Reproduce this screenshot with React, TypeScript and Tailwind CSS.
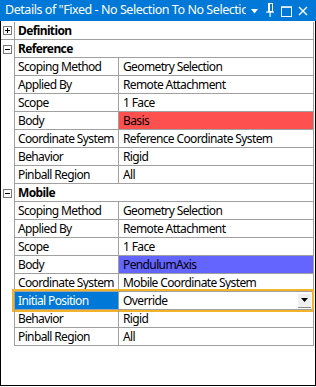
import React from 'react';

type Row = { label: string; value: string; bg?: string; selected?: boolean; dropdown?: boolean };

const referenceRows: Row[] = [
  { label: 'Scoping Method', value: 'Geometry Selection' },
  { label: 'Applied By', value: 'Remote Attachment' },
  { label: 'Scope', value: '1 Face' },
  { label: 'Body', value: 'Basis', bg: 'bg-[#ff5050]' },
  { label: 'Coordinate System', value: 'Reference Coordinate System' },
  { label: 'Behavior', value: 'Rigid' },
  { label: 'Pinball Region', value: 'All' },
];

const mobileRows: Row[] = [
  { label: 'Scoping Method', value: 'Geometry Selection' },
  { label: 'Applied By', value: 'Remote Attachment' },
  { label: 'Scope', value: '1 Face' },
  { label: 'Body', value: 'PendulumAxis', bg: 'bg-[#6464ff]' },
  { label: 'Coordinate System', value: 'Mobile Coordinate System' },
  { label: 'Initial Position', value: 'Override', selected: true, dropdown: true },
  { label: 'Behavior', value: 'Rigid' },
  { label: 'Pinball Region', value: 'All' },
];

const Expander: React.FC<{ open: boolean }> = ({ open }) => (
  <div className="relative w-[9px] h-[9px] border border-[#7a7a7a] bg-white">
    <div className="absolute left-[1px] top-[3px] w-[5px] h-px bg-black" />
    {!open && <div className="absolute left-[3px] top-[1px] w-px h-[5px] bg-black" />}
  </div>
);

const GroupHeader: React.FC<{ title: string; open: boolean }> = ({ title, open }) => (
  <div className={`flex h-[18px] ${open ? '' : 'border-b border-[#a0a0a0]'}`}>
    <div className="w-[13px] flex items-center pl-[2px]">
      <Expander open={open} />
    </div>
    <div
      className={`flex-1 flex items-center pl-[3px] font-bold border-l border-r border-[#a0a0a0] ${open ? 'border-b' : ''}`}
    >
      {title}
    </div>
  </div>
);

const PropertyRow: React.FC<{ row: Row }> = ({ row }) => (
  <div className="relative flex h-[18px]">
    <div className="w-[13px]" />
    <div className="flex-1 flex border-l border-r border-b border-[#a0a0a0]">
      <div
        className={`w-[104px] flex items-center pl-[3px] border-r border-[#a0a0a0] whitespace-nowrap overflow-hidden ${row.selected ? 'bg-[#0078d7] text-white' : ''}`}
      >
        {row.label}
      </div>
      <div className={`flex-1 flex items-center pl-[4px] whitespace-nowrap ${row.bg ?? ''}`}>
        <span>{row.value}</span>
        {row.dropdown && (
          <div className="ml-auto mr-[2px] w-[13px] h-[14px] bg-[#f0f0f0] border-b border-[#8a8a8a] flex items-center justify-center">
            <svg width="7" height="4" viewBox="0 0 7 4">
              <polygon points="0,0 7,0 3.5,4" fill="#000" />
            </svg>
          </div>
        )}
      </div>
    </div>
    {row.selected && (
      <div className="absolute left-[11px] right-0 -top-[3px] -bottom-[2px] border-2 border-[#f2b32b] pointer-events-none" />
    )}
  </div>
);

export default function App() {
  return (
    <div
      className="w-[316px] h-[386px] flex flex-col bg-white text-[12px] tracking-[-0.62px] text-black"
      style={{ fontFamily: '"Noto Sans", "Open Sans", sans-serif' }}
    >
      {/* Title bar */}
      <div className="h-[21px] bg-[#0078d7] flex items-start text-white shrink-0">
        <div className="w-[246px] overflow-hidden whitespace-nowrap pl-[5px] text-[12.5px] tracking-[-0.45px] leading-[20px]">
          Details of "Fixed - No Selection To No Selection"
        </div>
        <svg className="ml-[5px] mt-[9px]" width="7" height="5" viewBox="0 0 7 5">
          <polygon points="0,0 7,0 3.5,4.5" fill="#fff" />
        </svg>
        <svg className="ml-[8px] mt-[3px]" width="8" height="14" viewBox="0 0 8 14">
          <rect x="2.5" y="0.5" width="4" height="8" fill="none" stroke="#fff" />
          <rect x="2" y="0" width="2" height="9" fill="#fff" />
          <rect x="0" y="8.5" width="8" height="1.2" fill="#fff" />
          <rect x="3.5" y="9" width="1.2" height="5" fill="#fff" />
        </svg>
        <svg className="ml-[7px] mt-[6px]" width="11" height="11" viewBox="0 0 11 11">
          <rect x="0.5" y="1" width="10" height="9.5" fill="none" stroke="#fff" />
          <rect x="0" y="0.5" width="11" height="1.2" fill="#fff" />
        </svg>
        <svg className="ml-[6px] mt-[6px]" width="10" height="10" viewBox="0 0 10 10">
          <path d="M1 1 L9 9 M9 1 L1 9" stroke="#fff" strokeWidth="1.4" />
        </svg>
      </div>

      {/* Property grid */}
      <div className="flex-1 border-l border-r border-b border-black pt-px pr-px">
        <GroupHeader title="Definition" open={false} />
        <GroupHeader title="Reference" open />
        {referenceRows.map((r, i) => (
          <PropertyRow key={'r' + i} row={r} />
        ))}
        <GroupHeader title="Mobile" open />
        {mobileRows.map((r, i) => (
          <PropertyRow key={'m' + i} row={r} />
        ))}
      </div>
    </div>
  );
}
